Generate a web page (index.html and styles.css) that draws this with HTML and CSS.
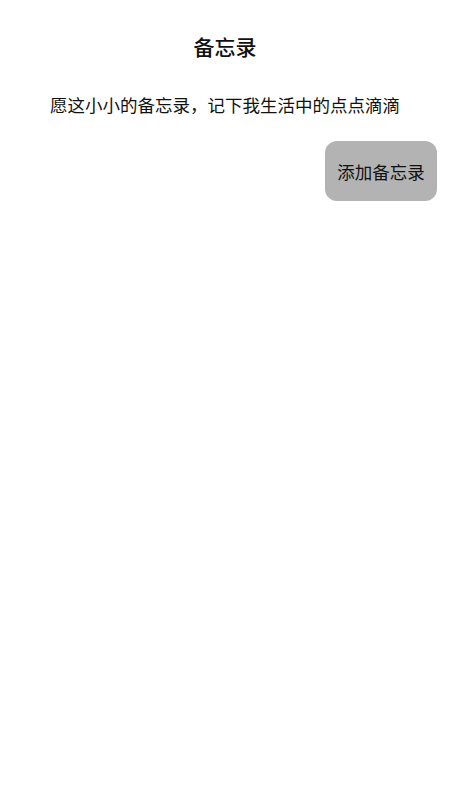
FILE: index.html
```html
<!DOCTYPE html>
<html lang="zh-CN">
<head>
  <meta charset="UTF-8">
  <title>备忘录</title>
  <meta name="viewport" content="width=device-width, initial-scale=1.0">
  <link rel="stylesheet" href="styles.css">
</head>
<body>
  <h1 class="title">备忘录</h1>
  <p class="motto">愿这小小的备忘录，记下我生活中的点点滴滴</p>
  <div class="actions">
    <button class="add-btn">添加备忘录</button>
  </div>
</body>
</html>
```

FILE: styles.css
```css
body {
  font-family: "Noto Sans CJK SC", "Noto Sans", sans-serif;
  background-color: #fff;
  color: #111;
  margin: 0;
  padding: 0;
}

.title {
  font-size: 21px;
  font-weight: 500;
  line-height: 28px;
  text-align: center;
  margin: 32px 0 0;
}

.motto {
  font-size: 17.5px;
  line-height: 24px;
  text-align: center;
  margin: 33px 0 0;
}

.actions {
  display: flex;
  justify-content: flex-end;
  padding: 0 13px;
  margin-top: 24px;
}

.add-btn {
  font-family: inherit;
  font-size: 17.5px;
  color: #111;
  width: 112px;
  height: 60px;
  background-color: #b3b3b3;
  border: none;
  border-radius: 12px;
  cursor: pointer;
}
```
